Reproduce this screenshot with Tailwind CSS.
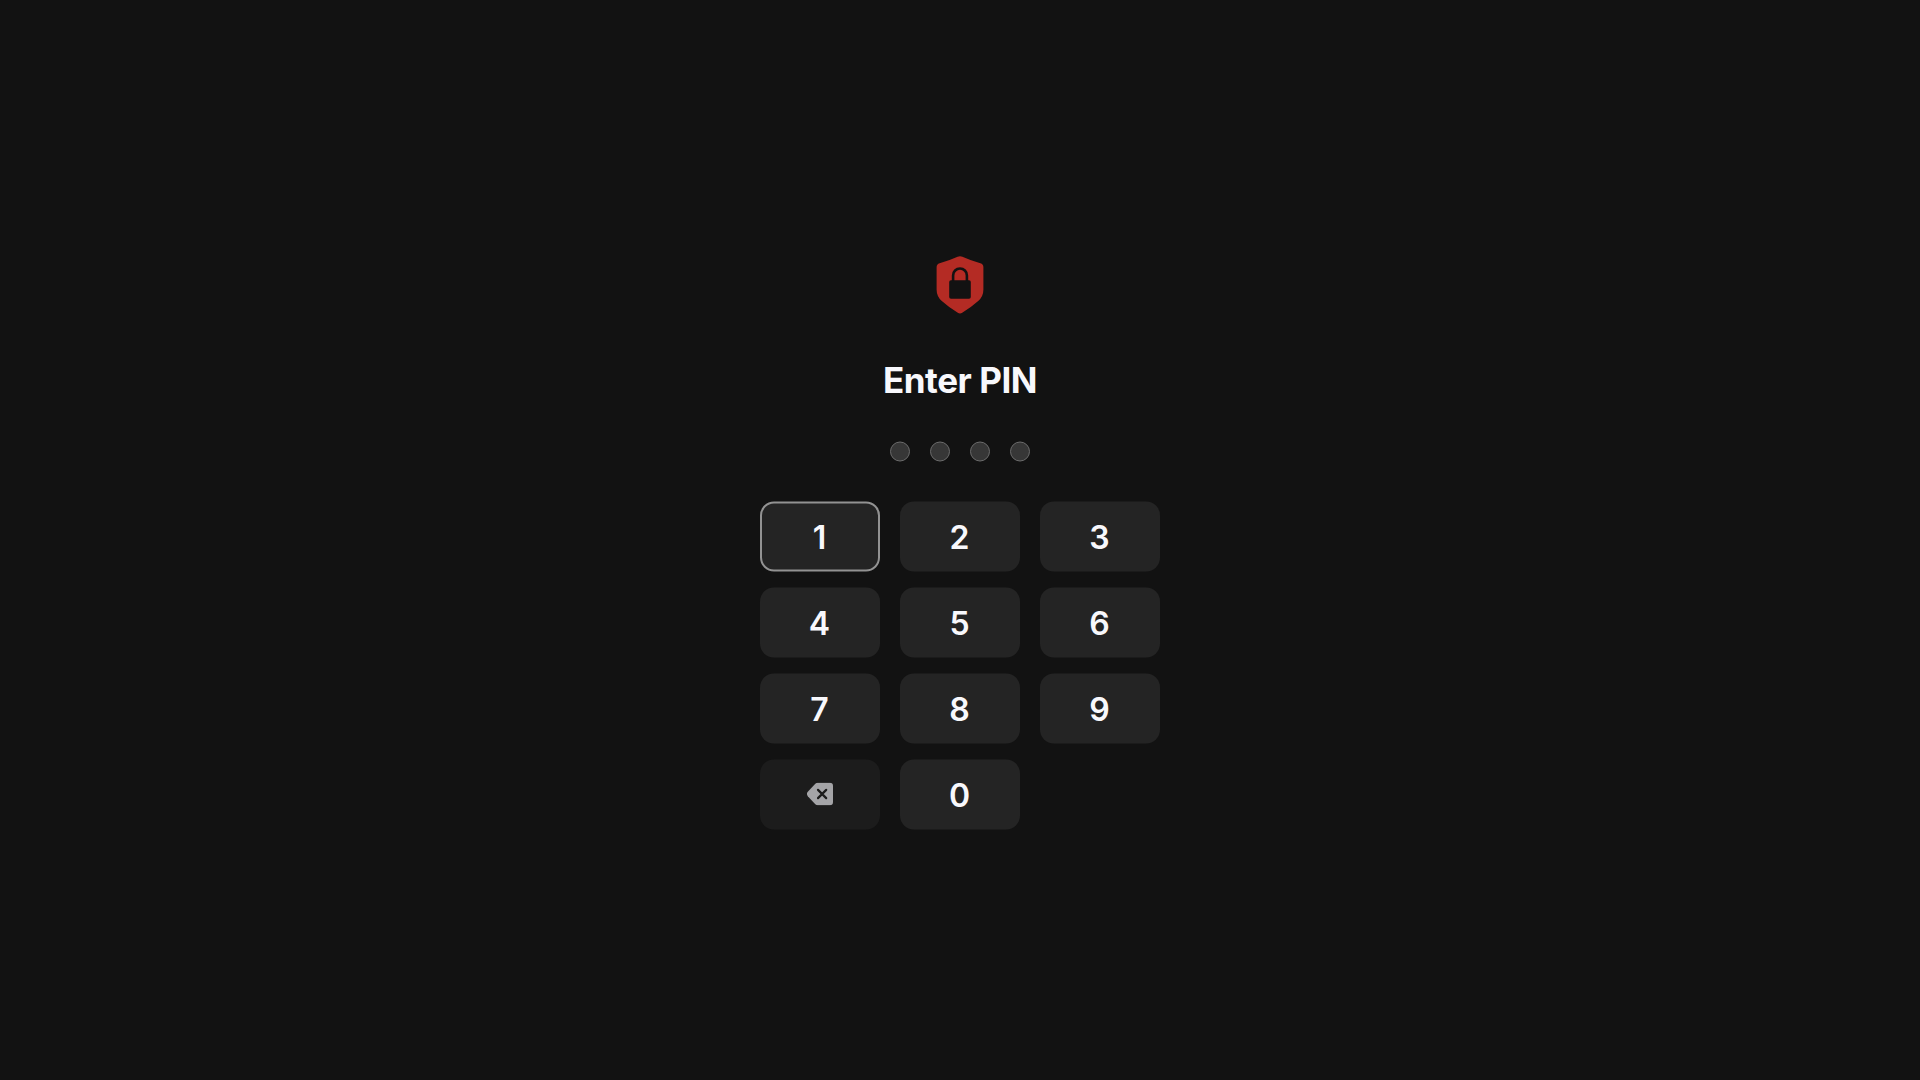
<!DOCTYPE html>
<html lang="en">
<head>
  <meta charset="UTF-8">
  <meta name="viewport" content="width=device-width, initial-scale=1.0">
  <title>Enter PIN</title>
  <script src="https://cdn.jsdelivr.net/npm/@tailwindcss/browser@4"></script>
</head>
<body class="flex flex-col items-center h-screen overflow-hidden bg-[#121212] pt-[256px] font-['Inter',sans-serif] text-[#f8f8fc]">
  <svg class="w-12 h-[58px] shrink-0" viewBox="0 0 48 58" fill="none">
    <path d="M21.6 .7Q24 -.4 26.4 .7Q35 4.6 44.4 7.2Q47.4 8.1 47.4 11.2V33.5Q47.4 40.5 42.2 45Q35.5 51 26.2 56.8Q24 58.2 21.8 56.8Q12.5 51 5.8 45Q.6 40.5 .6 33.5V11.2Q.6 8.1 3.6 7.2Q13 4.6 21.6 .7Z" fill="#b42b24"/>
    <path d="M17.1 25.5V19.4A6.9 6.9 0 0 1 30.9 19.4V25.5" stroke="#121212" stroke-width="2.6"/>
    <rect x="13.2" y="24.2" width="21.6" height="18.6" rx="1.8" fill="#121212"/>
  </svg>

  <h1 class="mt-11 h-11 text-[35px] leading-[44px] font-bold tracking-[-0.45px]">Enter PIN</h1>

  <div class="mt-[39px] flex gap-5 translate-y-[0.5px]">
    <span class="size-5 rounded-full border border-[#6c6c6c] bg-[#373737]"></span>
    <span class="size-5 rounded-full border border-[#6c6c6c] bg-[#373737]"></span>
    <span class="size-5 rounded-full border border-[#6c6c6c] bg-[#373737]"></span>
    <span class="size-5 rounded-full border border-[#6c6c6c] bg-[#373737]"></span>
  </div>

  <div class="mt-10 grid grid-cols-[repeat(3,120px)] auto-rows-[70px] gap-x-5 gap-y-4 text-[32px] font-semibold translate-y-[0.5px]">
    <button class="rounded-[14px] bg-[#242424] pt-px pr-px border-2 border-[#929292]">1</button>
    <button class="rounded-[14px] bg-[#242424] pt-px pr-px">2</button>
    <button class="rounded-[14px] bg-[#242424] pt-px pr-px">3</button>
    <button class="rounded-[14px] bg-[#242424] pt-px pr-px">4</button>
    <button class="rounded-[14px] bg-[#242424] pt-px pr-px">5</button>
    <button class="rounded-[14px] bg-[#242424] pt-px pr-px">6</button>
    <button class="rounded-[14px] bg-[#242424] pt-px pr-px">7</button>
    <button class="rounded-[14px] bg-[#242424] pt-px pr-px">8</button>
    <button class="rounded-[14px] bg-[#242424] pt-px pr-px">9</button>
    <button class="flex items-center justify-center rounded-[14px] bg-[#1c1c1c] pb-px" aria-label="Delete">
      <svg class="w-[26px] h-[23px]" viewBox="0 0 26 23" fill="none">
        <path d="M10.8 .3H22.8Q26 .3 26 3.5V19.5Q26 22.7 22.8 22.7H10.8Q9.3 22.7 8.3 21.7L.8 13.7Q-.9 11.5 .8 9.3L8.3 1.3Q9.3 .3 10.8 .3Z" fill="#a4a4a7"/>
        <path d="M11 7.4L19.2 15.6M19.2 7.4L11 15.6" stroke="#1c1c1c" stroke-width="2.2" stroke-linecap="round"/>
      </svg>
    </button>
    <button class="rounded-[14px] bg-[#242424] pt-px pr-px">0</button>
  </div>
</body>
</html>
